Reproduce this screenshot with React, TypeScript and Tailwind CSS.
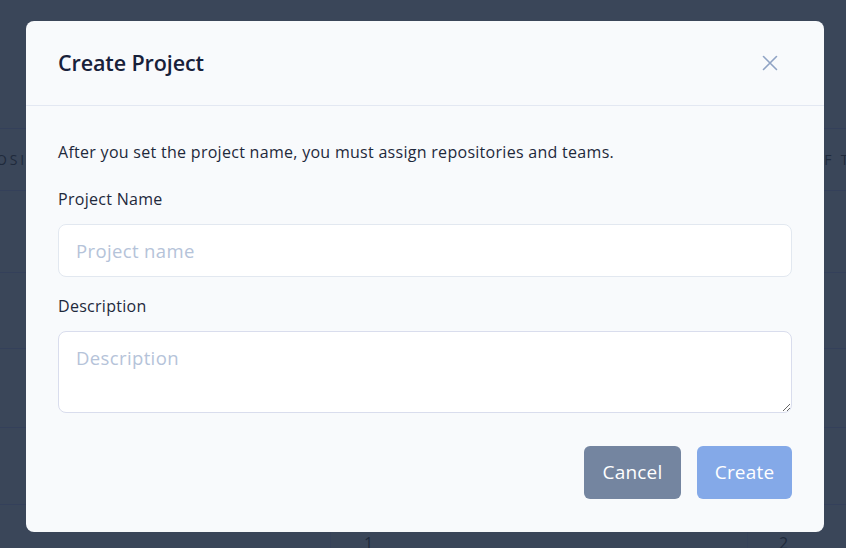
const App = () => {
  return (
    <div className="relative h-[548px] w-full overflow-hidden bg-[#3a4659] font-['Open_Sans',sans-serif]">
      {/* table behind the overlay */}
      <div className="flex flex-col pt-[128px]">
        <div className="flex h-[62px] items-center border-t border-[#34405a] text-[14px] tracking-[0.2em] text-[#1f2a3c]">
          <span className="-ml-[4px]">OSITORY</span>
          <span className="ml-auto mr-[-38px]">OF TIME</span>
        </div>
        <div className="h-[82px] border-t border-[#34405a]"></div>
        <div className="h-[76px] border-t border-[#34405a]"></div>
        <div className="h-[79px] border-t border-[#34405a]"></div>
        <div className="h-[77px] border-t border-[#34405a]"></div>
        <div className="flex h-[44px] border-t border-[#34405a] text-[16px] text-[#1f2a3c]">
          <div className="w-[331px] border-r border-[#37435a]"></div>
          <div className="w-[417px] border-r border-[#37435a] pt-[26px] pl-[33px]">1</div>
          <div className="flex-1 pt-[26px] pl-[31px]">2</div>
        </div>
      </div>

      {/* modal */}
      <div className="absolute inset-0 pl-[26px] pt-[21px]">
        <div className="w-[798px] overflow-hidden rounded-[8px] bg-[#f8fafc]">
          <div className="flex h-[85px] items-center justify-between border-b border-[#e3e8f2] px-8">
            <h2 className="pt-[1px] text-[21.5px] font-semibold tracking-[-0.005em] text-[#17213a]">Create Project</h2>
            <button className="mr-[14px] text-[#8fa3c4]">
              <svg width="16" height="16" viewBox="0 0 16 16" fill="none" stroke="currentColor" strokeWidth="1.6" strokeLinecap="round">
                <path d="M1.5 1.5 L14.5 14.5 M14.5 1.5 L1.5 14.5" />
              </svg>
            </button>
          </div>
          <div className="flex flex-col px-8 pt-[34px] pb-[33px]">
            <p className="text-[16px] leading-6 tracking-[0.018em] text-[#1e293b]">
              After you set the project name, you must assign repositories and teams.
            </p>
            <label className="mt-[23px] text-[16px] leading-6 tracking-[0.018em] text-[#1e293b]">Project Name</label>
            <input
              placeholder="Project name"
              className="mt-[13px] h-[53px] w-full rounded-[8px] border border-[#e2e8f0] bg-white px-[17px] text-[18.5px] tracking-[0.02em] text-[#1e293b] outline-none placeholder:text-[#b5c3d9]"
            />
            <label className="mt-[17px] text-[16px] leading-6 tracking-[0.018em] text-[#1e293b]">Description</label>
            <textarea
              placeholder="Description"
              className="mt-[13px] h-[82px] w-full rounded-[8px] border border-[#d9dded] bg-white px-[17px] pt-[12px] text-[18.5px] tracking-[0.02em] text-[#1e293b] outline-none placeholder:text-[#b5c3d9]"
            ></textarea>
            <div className="mt-[33px] flex justify-end gap-4">
              <button className="h-[53px] w-[97px] rounded-[6px] bg-[#7485a0] text-[19px] font-medium tracking-[0.01em] text-white">Cancel</button>
              <button className="h-[53px] w-[95px] rounded-[6px] bg-[#84a9e8] text-[19px] font-medium tracking-[0.01em] text-white">Create</button>
            </div>
          </div>
        </div>
      </div>
    </div>
  )
}

export default App
